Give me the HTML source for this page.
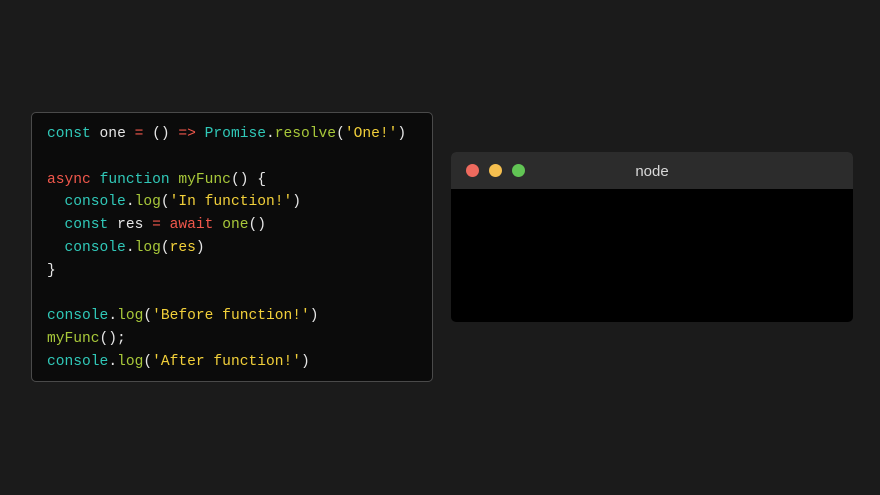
<!DOCTYPE html>
<html><head><style>
html,body{margin:0;padding:0;background:#1b1b1b;width:880px;height:495px;overflow:hidden}
.code{position:absolute;left:31px;top:112px;width:400px;height:268px;background:#0b0b0b;border:1px solid #4a4a4a;border-radius:5px}
pre{position:absolute;left:15px;top:10px;margin:0;font-family:"Liberation Mono",monospace;font-size:14.6px;line-height:22.8px;color:#e6e6e6}
.t{color:#30c8b8}.r{color:#f0574b}.g{color:#a8c83a}.y{color:#f2d03a}
.win{position:absolute;left:451px;top:152px;width:402px;height:170px;background:#000;border-radius:5px;overflow:hidden}
.bar{height:37px;background:#2c2c2c;position:relative}
.d{position:absolute;top:12px;width:13px;height:13px;border-radius:50%}
.ttl{position:absolute;left:0;right:0;top:11px;text-align:center;color:#d8d8d8;font-family:"Liberation Sans",sans-serif;font-size:15px}
</style></head><body>
<div class="code"><pre><span class="t">const</span> one <span class="r">=</span> () <span class="r">=&gt;</span> <span class="t">Promise</span>.<span class="g">resolve</span>(<span class="y">'One!'</span>)

<span class="r">async</span> <span class="t">function</span> <span class="g">myFunc</span>() {
  <span class="t">console</span>.<span class="g">log</span>(<span class="y">'In function!'</span>)
  <span class="t">const</span> res <span class="r">=</span> <span class="r">await</span> <span class="g">one</span>()
  <span class="t">console</span>.<span class="g">log</span>(<span class="y">res</span>)
}

<span class="t">console</span>.<span class="g">log</span>(<span class="y">'Before function!'</span>)
<span class="g">myFunc</span>();
<span class="t">console</span>.<span class="g">log</span>(<span class="y">'After function!'</span>)</pre></div>
<div class="win"><div class="bar">
<div class="d" style="left:15px;background:#ee6a5e"></div>
<div class="d" style="left:38px;background:#f5bf4f"></div>
<div class="d" style="left:61px;background:#61c454"></div>
<div class="ttl">node</div></div></div>
</body></html>
